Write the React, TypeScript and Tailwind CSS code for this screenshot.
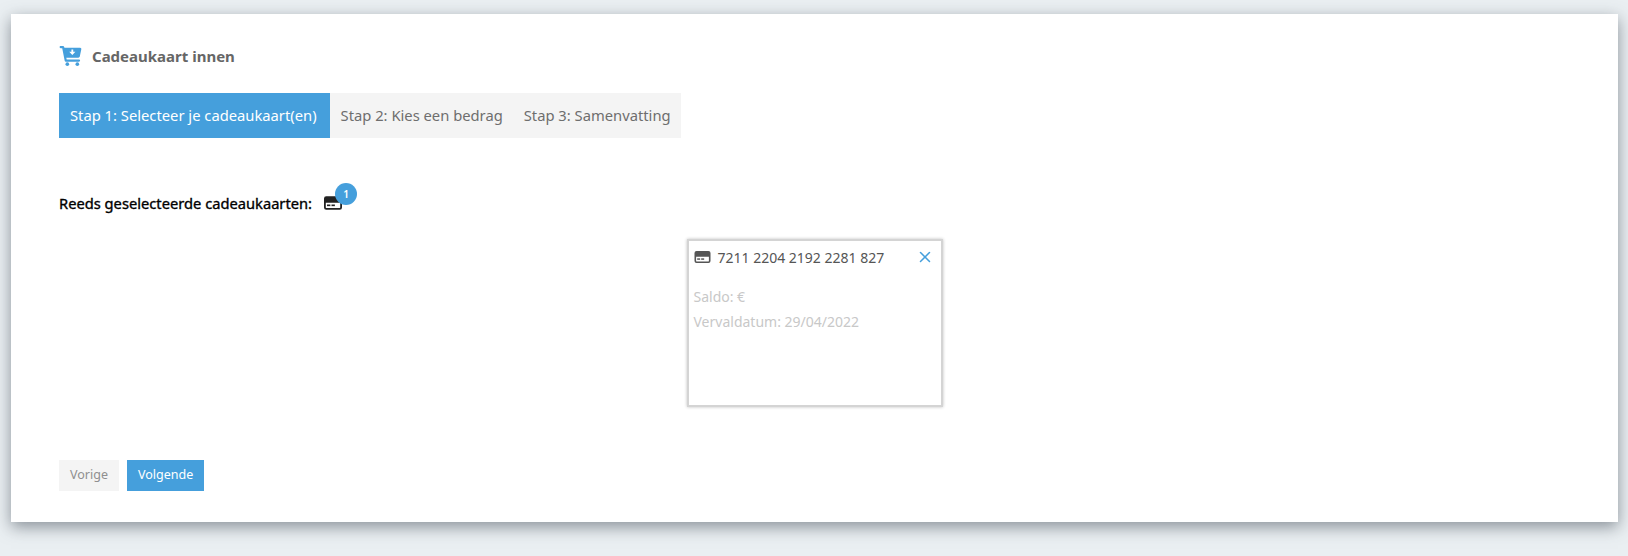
import { X } from "lucide-react";

const CardIcon = ({ className }: { className: string }) => (
  <svg viewBox="0 0 24 18" className={className} fill="currentColor">
    <path
      fillRule="evenodd"
      d="M3 0h18a3 3 0 0 1 3 3v12a3 3 0 0 1-3 3H3a3 3 0 0 1-3-3V3a3 3 0 0 1 3-3Zm-.6 8.500v6.500c0 .3.3.6.6.6h18c.3 0 .6-.3.6-.6V8.500H2.400Z"
    />
    <rect x="4" y="11" width="4.500" height="2.200" />
    <rect x="10" y="11" width="4.500" height="2.200" />
  </svg>
);

const CartIcon = () => (
  <svg viewBox="0 0 24 22" className="h-[20px] w-[23px] text-[#459fdc]" fill="currentColor">
    <path d="M0 1.200C0 .5.500 0 1.200 0h2.300c.8 0 1.400.5 1.600 1.200l.2.800h17.300c.9 0 1.500.8 1.300 1.700l-1.700 7.800c-.2.800-.8 1.300-1.600 1.300H7.400l.4 2h13.600a1.200 1.200 0 1 1 0 2.400H6.800c-.6 0-1.100-.4-1.200-1L2.900 2.400H1.200C.5 2.400 0 1.900 0 1.200Z" />
    <circle cx="8.500" cy="20" r="2" />
    <circle cx="19.500" cy="20" r="2" />
    <path d="M13 3.800h2v2.600h2.400L14 10l-3.400-3.600H13V3.800Z" fill="#fff" />
  </svg>
);

export default function App() {
  return (
    <div className="h-[556px] overflow-hidden bg-[#eaeff2] pl-[11px] pt-[14px] font-['Noto_Sans','Open_Sans',sans-serif]">
      <div className="h-[508px] w-[1607px] bg-white pl-[48px] pr-[48px] pt-[32px] shadow-[0_5px_15px_rgba(60,70,80,0.55)]">
        <div className="flex h-[20px] items-center gap-[10px]">
          <CartIcon />
          <h1 className="text-[15px] font-bold text-[#666666]">Cadeaukaart innen</h1>
        </div>

        <div className="mt-[27px] flex h-[45px] w-fit items-center bg-[#f4f4f4] text-[14.750px] text-[#6e6e6e]">
          <div className="flex h-full items-center bg-[#459fdc] pl-[11px] pr-[13px] text-white">
            Stap 1: Selecteer je cadeaukaart(en)
          </div>
          <div className="flex h-full items-center pl-[11px] pr-[10px]">Stap 2: Kies een bedrag</div>
          <div className="flex h-full items-center pl-[11px] pr-[10px]">Stap 3: Samenvatting</div>
        </div>

        <div className="mt-[53px] flex h-[24px] items-center">
          <span className="text-[14.700px] text-black [-webkit-text-stroke:0.35px_black]">
            Reeds geselecteerde cadeaukaarten:
          </span>
          <div className="relative ml-[12px]">
            <CardIcon className="h-[14px] w-[18px] text-[#222222]" />
            <span className="absolute left-[11px] top-[-13px] flex h-[22px] w-[22px] items-center justify-center rounded-full bg-[#459fdc] text-[10px] font-semibold text-white">
              1
            </span>
          </div>
        </div>

        <div className="mt-[24px] flex justify-center">
          <div className="h-[168px] w-[256px] border-2 border-[#d4d4d4] bg-white px-[5px] pt-[6px] shadow-[0_0_3px_rgba(0,0,0,0.25)]">
            <div className="flex h-[20px] items-center text-[14px] text-[#555555]">
              <CardIcon className="h-[12px] w-[17px] text-[#555555]" />
              <span className="ml-[7px]">7211 2204 2192 2281 827</span>
              <X className="ml-auto mr-[2px] h-[18px] w-[18px] text-[#459fdc]" strokeWidth={2} />
            </div>
            <p className="mt-[20px] text-[14px] leading-[20px] text-[#c8c8c8]">Saldo: €</p>
            <p className="mt-[5px] text-[14px] leading-[20px] text-[#c8c8c8]">Vervaldatum: 29/04/2022</p>
          </div>
        </div>

        <div className="mt-[53px] flex gap-[8px] text-[12.500px]">
          <button className="flex h-[31px] items-center bg-[#f4f4f4] px-[11px] text-[#8f8f8f]">Vorige</button>
          <button className="flex h-[31px] items-center bg-[#459fdc] px-[11px] text-white">Volgende</button>
        </div>
      </div>
    </div>
  );
}
